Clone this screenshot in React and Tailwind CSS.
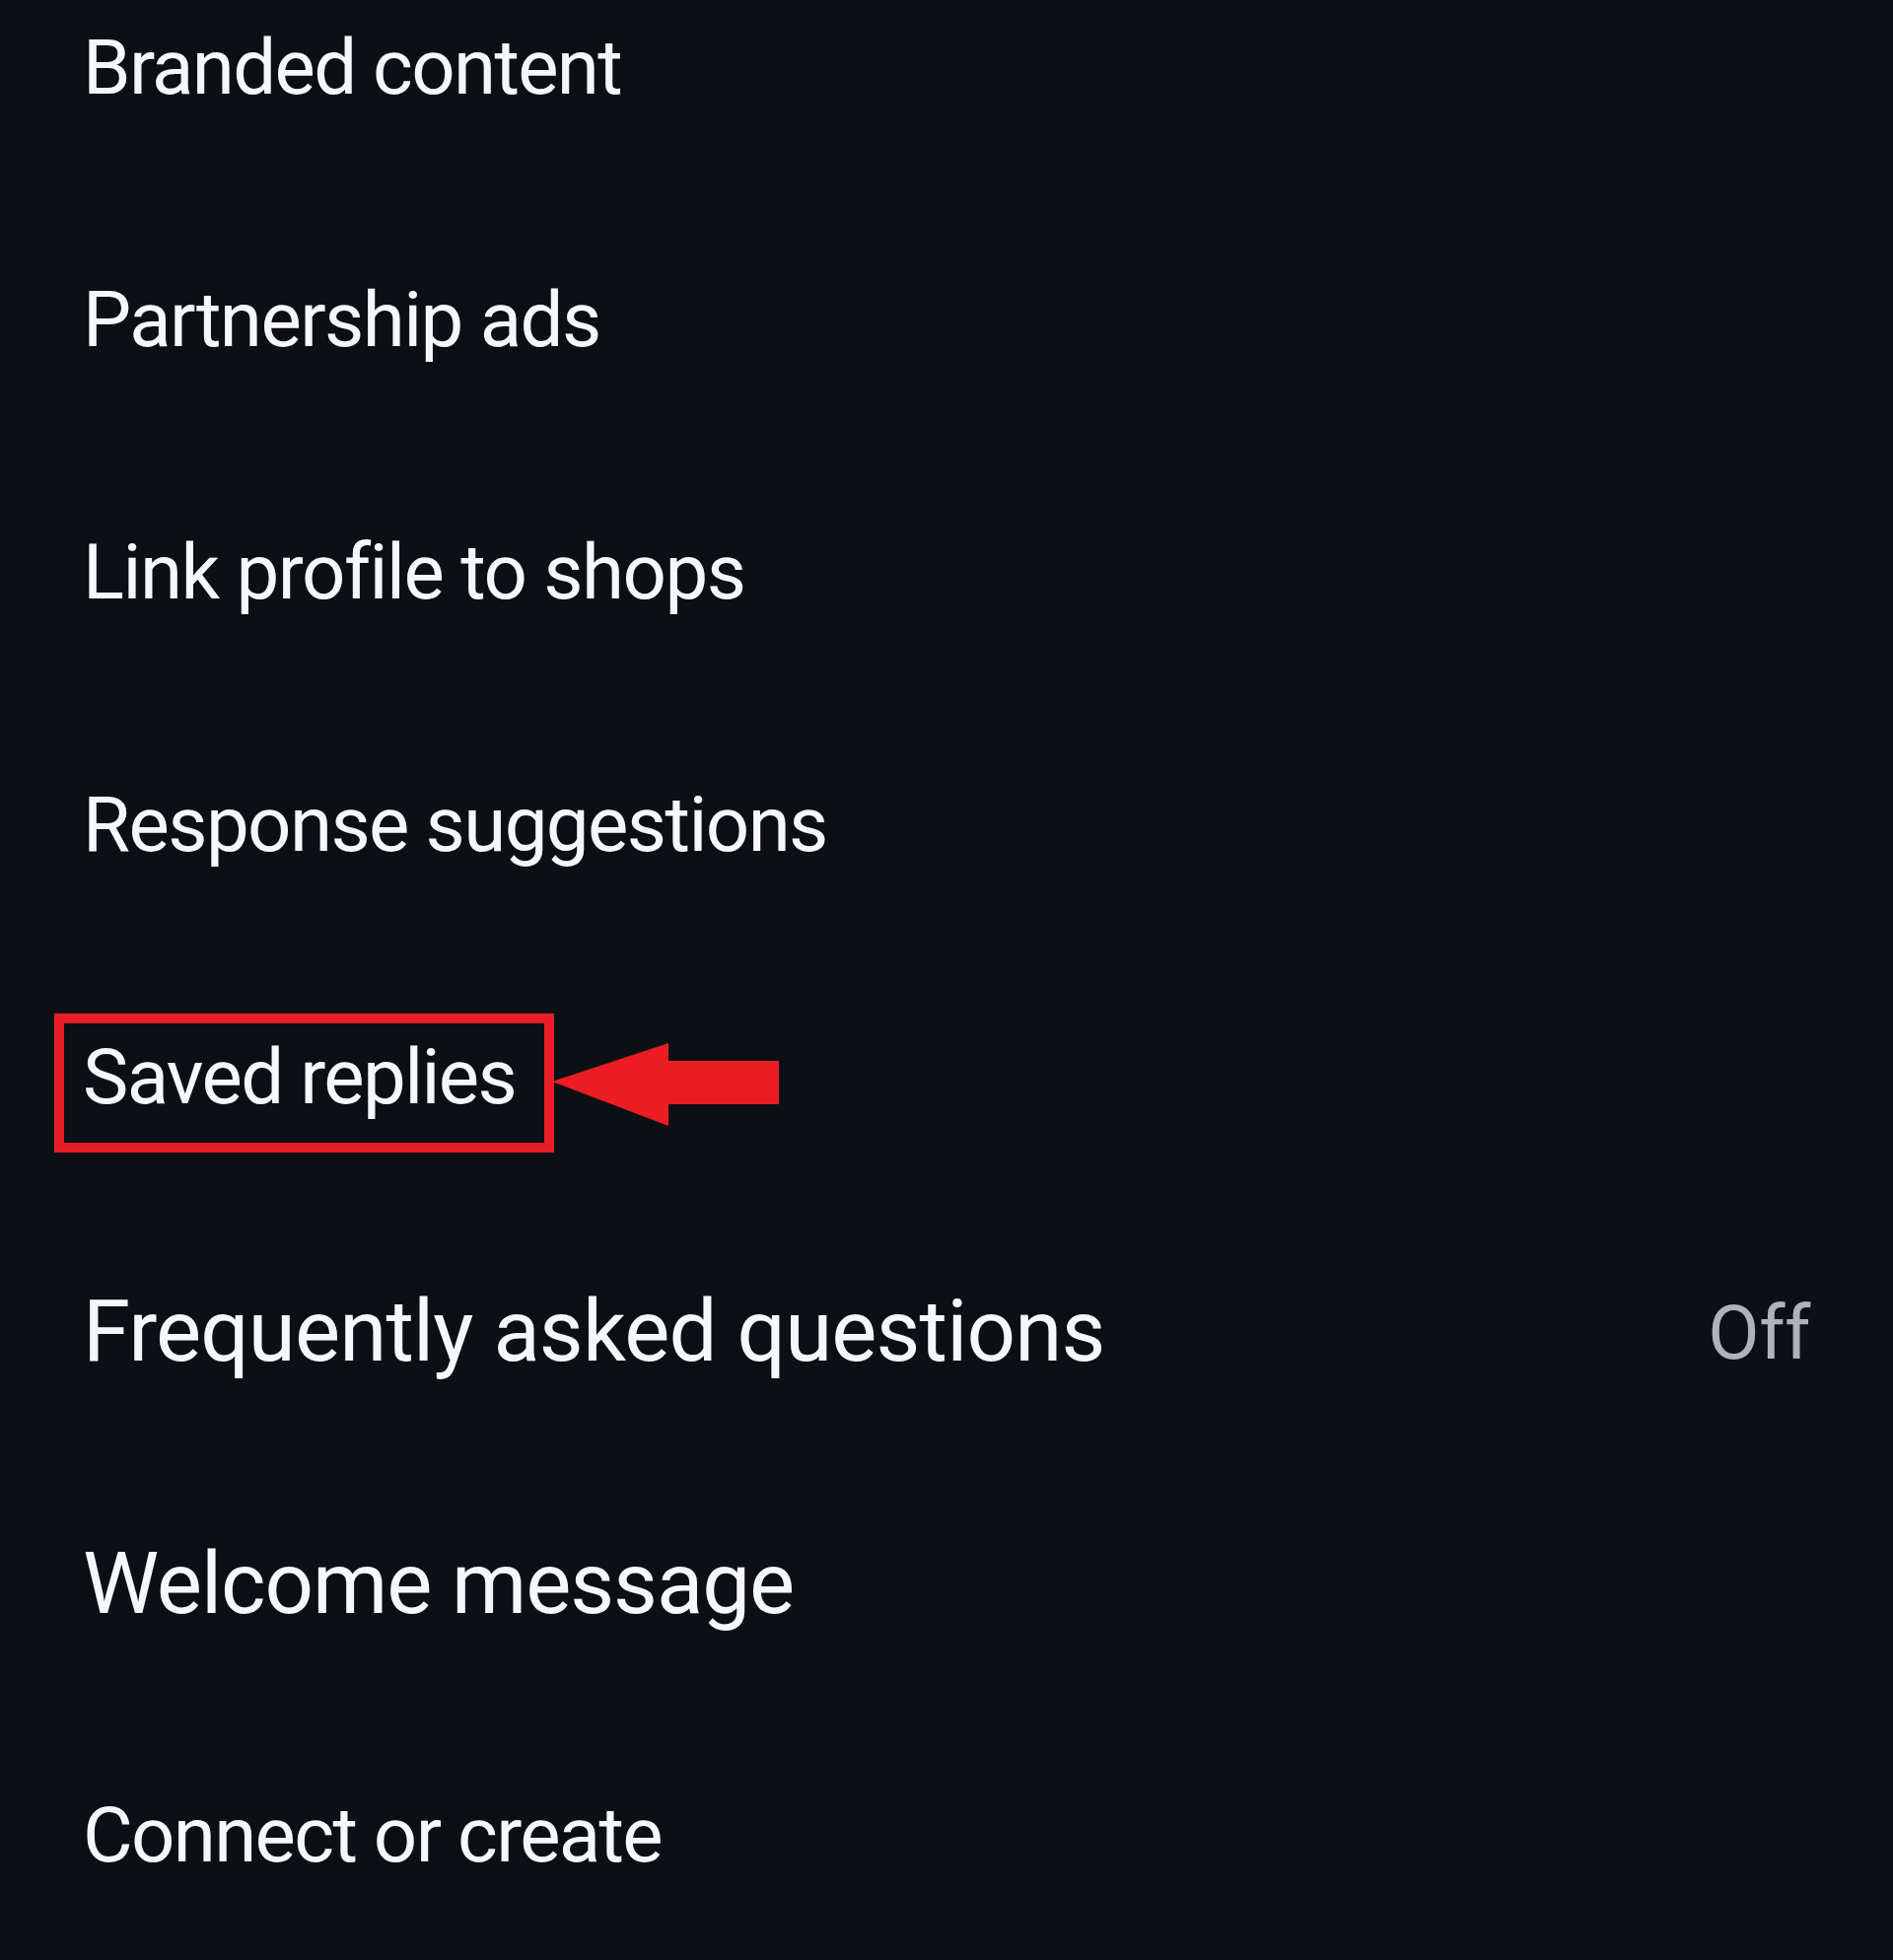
export default function App() {
  const rows = [
    { t: "Branded content", size: "text-[78px] tracking-[-1.7px]", pt: "pt-[30px]" },
    { t: "Partnership ads", size: "text-[78px] tracking-[-1.55px]", pt: "pt-[30px]" },
    { t: "Link profile to shops", size: "text-[78px] tracking-[-1.5px]", pt: "pt-[30px]" },
    { t: "Response suggestions", size: "text-[78px] tracking-[-1.6px]", pt: "pt-[30px]" },
    { t: "Saved replies", size: "text-[78px] tracking-[-1.65px]", pt: "pt-[30px]", boxed: true },
    { t: "Frequently asked questions", size: "text-[87px] tracking-[-0.85px]", pt: "pt-[27px]", right: "Off" },
    { t: "Welcome message", size: "text-[87px] tracking-[-1.05px]", pt: "pt-[27px]" },
    { t: "Connect or create", size: "text-[78px] tracking-[-1.7px]", pt: "pt-[31px]" },
  ];
  return (
    <div
      className="w-[1920px] h-[1988px] bg-[#0c0f14] overflow-hidden"
      style={{ fontFamily: "Roboto, 'Liberation Sans', sans-serif" }}
    >
      {rows.map((r, i) => (
        <div key={i} className={`relative h-[256px] ${r.pt} pl-[84px] pr-[84px] flex items-start justify-between`}>
          <span className={`${r.size} leading-none text-[#f5f7fa] whitespace-nowrap`}>{r.t}</span>
          {r.right && (
            <span className="text-[76px] leading-none text-[#aeb3bb] pt-[7px] tracking-[-0.5px]">{r.right}</span>
          )}
          {r.boxed && (
            <>
              <div className="absolute left-[55px] top-[4px] w-[507px] h-[141px] border-[10px] border-[#e81d25]" />
              <svg
                className="absolute left-[558px] top-[32px]"
                width="236"
                height="88"
                viewBox="0 0 236 88"
              >
                <path
                  d="M2 41 L120 2 L120 20 L232 20 L232 64 L120 64 L120 86 Z"
                  fill="#ec1c24"
                />
              </svg>
            </>
          )}
        </div>
      ))}
    </div>
  );
}
